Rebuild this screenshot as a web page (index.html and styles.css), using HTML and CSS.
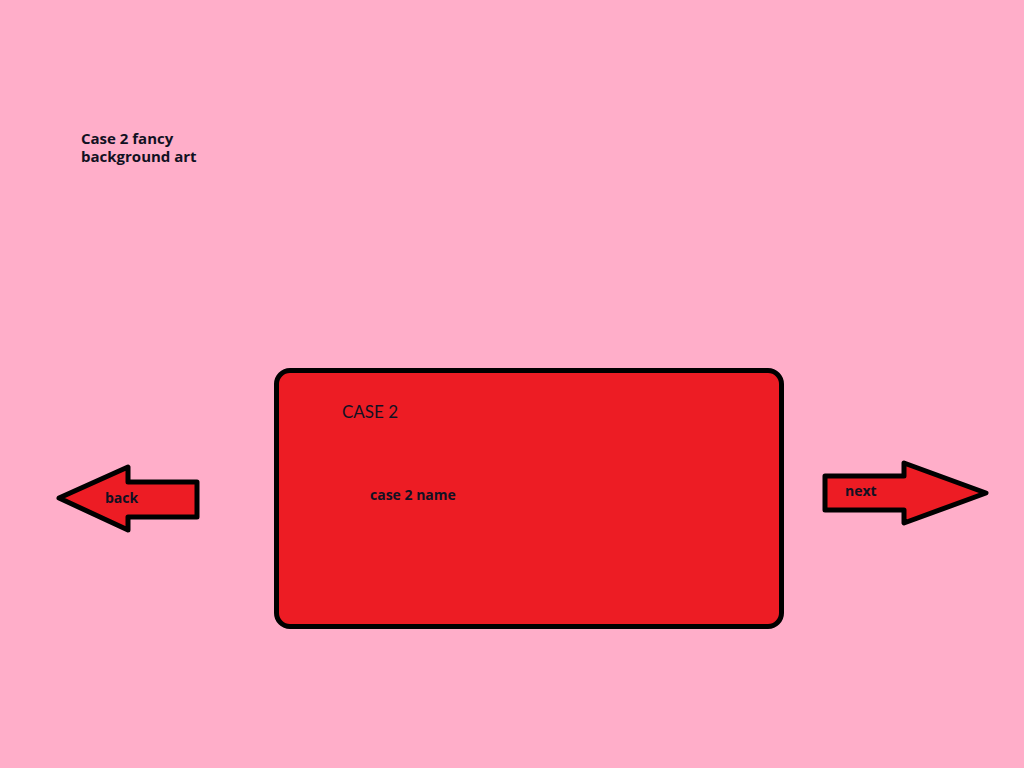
FILE: index.html
```html
<!DOCTYPE html>
<html>
<head>
<meta charset="utf-8">
<link rel="stylesheet" href="styles.css">
</head>
<body>
<div class="bg-art">Case 2 fancy<br>background art</div>
<div class="stage">
  <svg class="arrow back" width="148" height="74" viewBox="0 0 148 74">
    <polygon points="4,36 73,5 73,20 142,20 142,55 73,55 73,68" fill="#ed1c24" stroke="#000" stroke-width="5" stroke-linejoin="round"/>
    <text x="50" y="41">back</text>
  </svg>
  <div class="card">
    <div class="card-title">CASE 2</div>
    <div class="card-name">case 2 name</div>
  </div>
  <svg class="arrow next" width="172" height="70" viewBox="0 0 172 70">
    <polygon points="5,18 84,18 84,5 166,35 84,65 84,52 5,52" fill="#ed1c24" stroke="#000" stroke-width="5" stroke-linejoin="round"/>
    <text x="25" y="38">next</text>
  </svg>
</div>
</body>
</html>
```
FILE: styles.css
```css
html, body {
  margin: 0;
  padding: 0;
}
body {
  background: #ffaec9;
  width: 1024px;
  height: 768px;
  overflow: hidden;
  font-family: "Lato", "Open Sans", sans-serif;
  color: #111122;
}
.bg-art {
  padding: 129px 0 0 81px;
  font-family: "Open Sans", "Lato", sans-serif;
  font-size: 15px;
  line-height: 18px;
  font-weight: 700;
  height: 36px;
}
.stage {
  display: flex;
  align-items: flex-start;
  margin-top: 203px;
  padding-left: 55px;
}
.arrow {
  display: block;
  flex: none;
}
.arrow text {
  font-family: "Open Sans", "Lato", sans-serif;
  font-size: 14px;
  font-weight: 700;
  fill: #111122;
}
.arrow.back {
  margin-top: 94px;
}
.card {
  flex: none;
  margin-left: 71px;
  width: 500px;
  height: 251px;
  background: #ed1c24;
  border: 5px solid #000;
  border-radius: 16px;
}
.card-title {
  margin: 29px 0 0 63px;
  font-size: 17px;
  line-height: 20px;
}
.card-name {
  margin: 64px 0 0 91px;
  font-family: "Open Sans", "Lato", sans-serif;
  font-size: 14px;
  line-height: 18px;
  font-weight: 700;
}
.arrow.next {
  margin-left: 36px;
  margin-top: 90px;
}
```
